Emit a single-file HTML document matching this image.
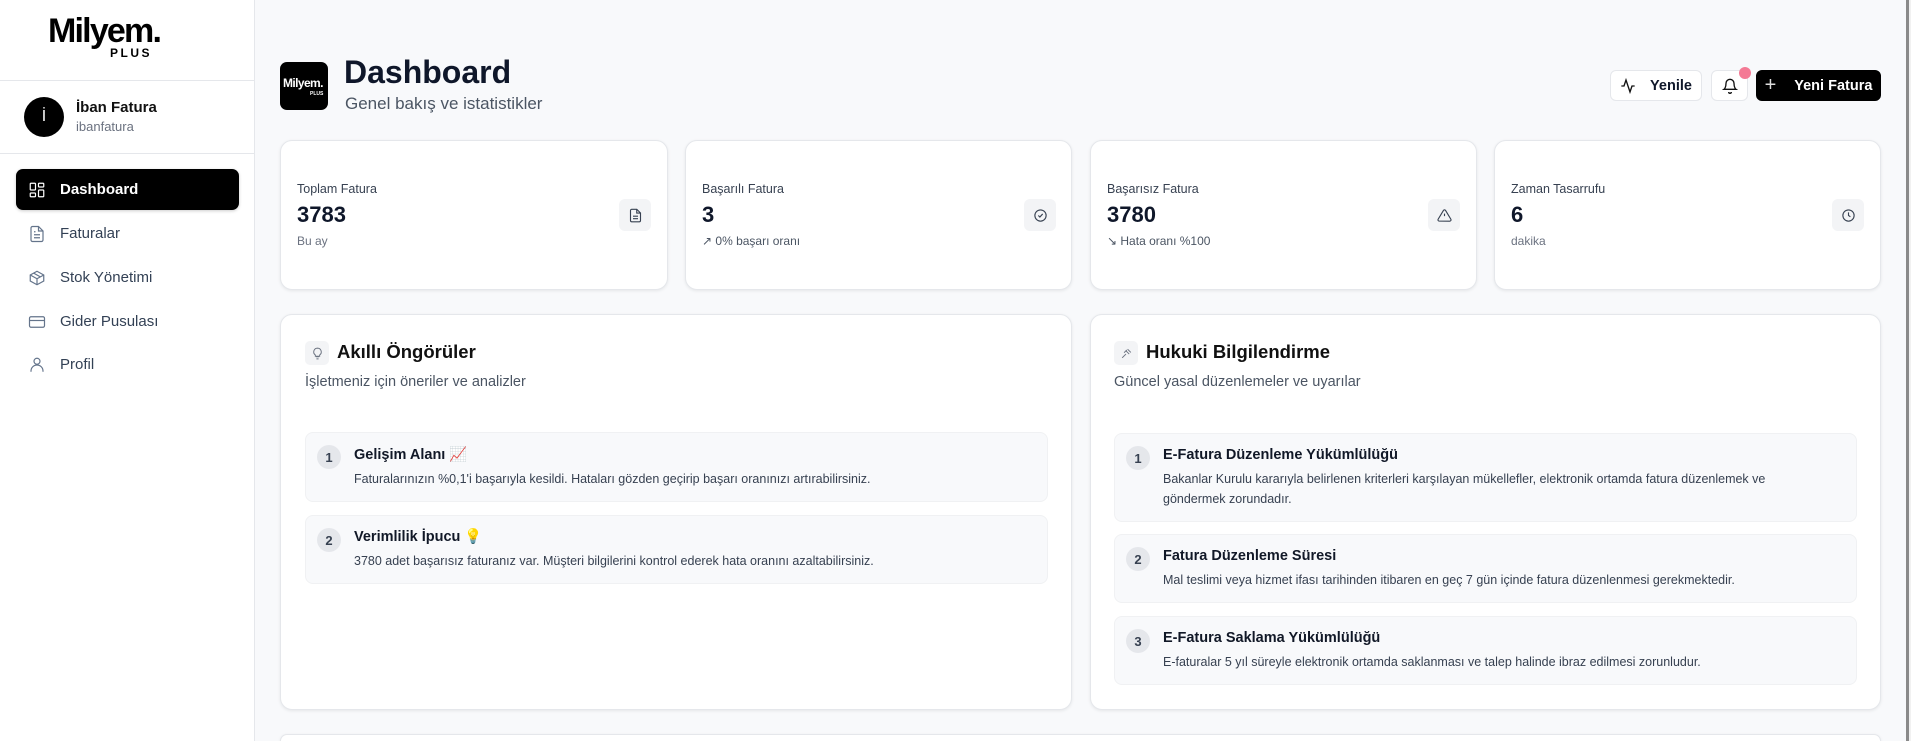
<!DOCTYPE html>
<html><head><meta charset="utf-8"><style>
*{box-sizing:border-box;margin:0;padding:0}
html{width:1911px;height:741px;overflow:hidden}
body{width:1911px;height:741px;overflow:hidden;background:#f8f9fb;font-family:"Liberation Sans","DejaVu Sans",sans-serif;color:#0f172a;position:relative}
.a{position:absolute}
.sb{left:0;top:0;width:255px;height:741px;background:#fff;border-right:1px solid #e5e7eb}
.hl{left:0;width:255px;height:1px;background:#e5e7eb}
.nav{left:16px;width:223px;height:41px;border-radius:7px;display:flex;align-items:center;padding-left:12px;font-size:15px;color:#334155}
.nav svg{width:18px;height:18px;margin-right:14px;stroke:#64748b;fill:none;stroke-width:1.6}
.card{background:#fff;border:1px solid #e5e7eb;border-radius:12px;box-shadow:0 1px 3px rgba(0,0,0,.08)}
.lab{font-size:12.5px;color:#374151}
.val{font-size:22px;font-weight:bold;color:#0f172a}
.sub{font-size:12px;color:#6b7280}
.ib{width:32px;height:32px;border-radius:6px;background:#f3f4f6;display:flex;align-items:center;justify-content:center}
.ib svg{width:15px;height:15px;stroke:#374151;fill:none;stroke-width:1.8}
.item{background:#f8f9fb;border:1px solid #f0f1f3;border-radius:8px}
.num{width:24px;height:24px;border-radius:50%;background:#e5e7eb;font-size:13px;font-weight:bold;color:#374151;display:flex;align-items:center;justify-content:center}
.it{font-size:14.5px;font-weight:bold;color:#111827}
.id{font-size:12.5px;color:#374151;line-height:20px}
.btn{height:31px;border:1px solid #e5e7eb;border-radius:6px;background:#fff;display:flex;align-items:center;justify-content:center;font-size:14.5px;font-weight:bold}
</style></head><body>
<div class="a sb"></div>
<div class="a" style="left:48px;top:12px;font-size:34px;font-weight:bold;letter-spacing:-1.8px;color:#000">Milyem.</div>
<div class="a" style="left:110px;top:46px;font-size:12px;font-weight:bold;letter-spacing:2.5px;color:#000">PLUS</div>
<div class="a hl" style="top:80px"></div>
<div class="a" style="left:24px;top:97px;width:40px;height:40px;border-radius:50%;background:#000;color:#fff;font-size:16px;display:flex;align-items:center;justify-content:center">İ</div>
<div class="a" style="left:76px;top:99px;font-size:15px;font-weight:bold;color:#111">İban Fatura</div>
<div class="a" style="left:76px;top:119px;font-size:13px;color:#6b7280">ibanfatura</div>
<div class="a hl" style="top:153px"></div>
<div class="a nav" style="top:169px;background:#000;color:#fff;font-weight:bold;box-shadow:0 1px 3px rgba(0,0,0,.2)"><svg viewBox="0 0 24 24" style="stroke:#fff"><rect x="3" y="3" width="7" height="9" rx="1"/><rect x="14" y="3" width="7" height="5" rx="1"/><rect x="14" y="12" width="7" height="9" rx="1"/><rect x="3" y="16" width="7" height="5" rx="1"/></svg>Dashboard</div>
<div class="a nav" style="top:213px"><svg viewBox="0 0 24 24"><path d="M14 2H6a2 2 0 0 0-2 2v16a2 2 0 0 0 2 2h12a2 2 0 0 0 2-2V8z"/><path d="M14 2v6h6M8 13h8M8 17h8M8 9h2"/></svg>Faturalar</div>
<div class="a nav" style="top:257px"><svg viewBox="0 0 24 24"><path d="M21 8l-9-5-9 5v8l9 5 9-5z"/><path d="M3 8l9 5 9-5M12 13v8M7.5 5.5l9 5"/></svg>Stok Yönetimi</div>
<div class="a nav" style="top:301px"><svg viewBox="0 0 24 24"><rect x="2" y="5" width="20" height="14" rx="2"/><path d="M2 10h20"/></svg>Gider Pusulası</div>
<div class="a nav" style="top:344px"><svg viewBox="0 0 24 24"><circle cx="12" cy="7" r="4"/><path d="M4 21v-1a7 7 0 0 1 16 0v1"/></svg>Profil</div>

<div class="a" style="left:280px;top:62px;width:48px;height:48px;border-radius:7px;background:#000;color:#fff"><div class="a" style="left:3px;top:14px;font-size:12px;font-weight:bold;letter-spacing:-.6px">Milyem.</div><div class="a" style="left:30px;top:29px;font-size:5px;font-weight:bold">PLUS</div></div>
<div class="a" style="left:344px;top:54px;font-size:32px;font-weight:bold;color:#0f172a">Dashboard</div>
<div class="a" style="left:345px;top:94px;font-size:17px;color:#4b5563">Genel bakış ve istatistikler</div>

<div class="a btn" style="left:1610px;top:70px;width:92px"><svg viewBox="0 0 24 24" width="16" height="16" fill="none" stroke="#111" stroke-width="2" style="margin-right:14px"><path d="M22 12h-4l-3 9L9 3l-3 9H2"/></svg>Yenile</div>
<div class="a btn" style="left:1711px;top:70px;width:37px"><svg viewBox="0 0 24 24" width="16" height="16" fill="none" stroke="#111" stroke-width="2"><path d="M6 8a6 6 0 0 1 12 0c0 7 3 9 3 9H3s3-2 3-9M10 21a2 2 0 0 0 4 0"/></svg></div>
<div class="a" style="left:1739px;top:67px;width:12px;height:12px;border-radius:50%;background:#f47a95"></div>
<div class="a btn" style="left:1756px;top:70px;width:125px;background:#000;border-color:#000;color:#fff"><span style="font-size:20px;font-weight:normal;margin-right:18px;color:#ddd">+</span>Yeni Fatura</div>

<div class="a card" style="left:280px;top:140px;width:388px;height:150px"></div>
<div class="a card" style="left:685px;top:140px;width:387px;height:150px"></div>
<div class="a card" style="left:1090px;top:140px;width:387px;height:150px"></div>
<div class="a card" style="left:1494px;top:140px;width:387px;height:150px"></div>

<div class="a lab" style="left:297px;top:182px">Toplam Fatura</div><div class="a val" style="left:297px;top:202px">3783</div><div class="a sub" style="left:297px;top:234px">Bu ay</div>
<div class="a ib" style="left:619px;top:199px"><svg viewBox="0 0 24 24"><path d="M14 2H6a2 2 0 0 0-2 2v16a2 2 0 0 0 2 2h12a2 2 0 0 0 2-2V8z"/><path d="M14 2v6h6M8 13h8M8 17h8"/></svg></div>
<div class="a lab" style="left:702px;top:182px">Başarılı Fatura</div><div class="a val" style="left:702px;top:202px">3</div><div class="a sub" style="left:702px;top:234px;color:#4b5563">↗ 0% başarı oranı</div>
<div class="a ib" style="left:1024px;top:199px"><svg viewBox="0 0 24 24"><circle cx="12" cy="12" r="9"/><path d="M8.5 12l2.5 2.5 4.5-5"/></svg></div>
<div class="a lab" style="left:1107px;top:182px">Başarısız Fatura</div><div class="a val" style="left:1107px;top:202px">3780</div><div class="a sub" style="left:1107px;top:234px;color:#4b5563">↘ Hata oranı %100</div>
<div class="a ib" style="left:1428px;top:199px"><svg viewBox="0 0 24 24"><path d="M10.3 3.9L1.8 18a2 2 0 0 0 1.7 3h17a2 2 0 0 0 1.7-3L13.7 3.9a2 2 0 0 0-3.4 0zM12 9v4M12 17h.01"/></svg></div>
<div class="a lab" style="left:1511px;top:182px">Zaman Tasarrufu</div><div class="a val" style="left:1511px;top:202px">6</div><div class="a sub" style="left:1511px;top:234px">dakika</div>
<div class="a ib" style="left:1832px;top:199px"><svg viewBox="0 0 24 24"><circle cx="12" cy="12" r="9"/><path d="M12 7v5l3 2"/></svg></div>

<div class="a card" style="left:280px;top:314px;width:792px;height:396px"></div>
<div class="a card" style="left:1090px;top:314px;width:791px;height:396px"></div>
<div class="a card" style="left:280px;top:734px;width:1601px;height:7px;border-bottom:none;border-radius:12px 12px 0 0"></div>

<div class="a" style="left:305px;top:341px;width:24px;height:24px;border-radius:5px;background:#f3f4f6;display:flex;align-items:center;justify-content:center"><svg viewBox="0 0 24 24" width="13" height="13" fill="none" stroke="#6b7280" stroke-width="1.8"><path d="M9 18h6M10 22h4M12 2a7 7 0 0 0-4 12.7V17h8v-2.3A7 7 0 0 0 12 2z"/></svg></div>
<div class="a" style="left:337px;top:341px;font-size:18.5px;font-weight:bold;color:#111">Akıllı Öngörüler</div>
<div class="a" style="left:305px;top:374px;font-size:14.5px;color:#4b5563">İşletmeniz için öneriler ve analizler</div>

<div class="a item" style="left:305px;top:432px;width:743px;height:70px"></div>
<div class="a num" style="left:317px;top:445px">1</div>
<div class="a it" style="left:354px;top:446px">Gelişim Alanı 📈</div>
<div class="a id" style="left:354px;top:469px">Faturalarınızın %0,1'i başarıyla kesildi. Hataları gözden geçirip başarı oranınızı artırabilirsiniz.</div>
<div class="a item" style="left:305px;top:515px;width:743px;height:69px"></div>
<div class="a num" style="left:317px;top:528px">2</div>
<div class="a it" style="left:354px;top:528px">Verimlilik İpucu 💡</div>
<div class="a id" style="left:354px;top:551px">3780 adet başarısız faturanız var. Müşteri bilgilerini kontrol ederek hata oranını azaltabilirsiniz.</div>

<div class="a" style="left:1114px;top:341px;width:24px;height:24px;border-radius:5px;background:#f3f4f6;display:flex;align-items:center;justify-content:center"><svg viewBox="0 0 24 24" width="13" height="13" fill="none" stroke="#6b7280" stroke-width="1.8"><path d="M14 4l6 6M11 7l6 6M12.5 5.5l-5 5M4 20l7-7"/></svg></div>
<div class="a" style="left:1146px;top:341px;font-size:18.5px;font-weight:bold;color:#111">Hukuki Bilgilendirme</div>
<div class="a" style="left:1114px;top:374px;font-size:14.5px;color:#4b5563">Güncel yasal düzenlemeler ve uyarılar</div>

<div class="a item" style="left:1114px;top:433px;width:743px;height:89px"></div>
<div class="a num" style="left:1126px;top:446px">1</div>
<div class="a it" style="left:1163px;top:447px">E-Fatura Düzenleme Yükümlülüğü</div>
<div class="a id" style="left:1163px;top:469px;width:660px">Bakanlar Kurulu kararıyla belirlenen kriterleri karşılayan mükellefler, elektronik ortamda fatura düzenlemek ve göndermek zorundadır.</div>
<div class="a item" style="left:1114px;top:534px;width:743px;height:69px"></div>
<div class="a num" style="left:1126px;top:547px">2</div>
<div class="a it" style="left:1163px;top:548px">Fatura Düzenleme Süresi</div>
<div class="a id" style="left:1163px;top:570px">Mal teslimi veya hizmet ifası tarihinden itibaren en geç 7 gün içinde fatura düzenlenmesi gerekmektedir.</div>
<div class="a item" style="left:1114px;top:616px;width:743px;height:69px"></div>
<div class="a num" style="left:1126px;top:629px">3</div>
<div class="a it" style="left:1163px;top:630px">E-Fatura Saklama Yükümlülüğü</div>
<div class="a id" style="left:1163px;top:652px">E-faturalar 5 yıl süreyle elektronik ortamda saklanması ve talep halinde ibraz edilmesi zorunludur.</div>

<div class="a" style="left:1906px;top:0;width:3px;height:741px;background:#8a8a8a"></div>
<div class="a" style="left:1909px;top:0;width:2px;height:741px;background:#f1f1f1"></div>
</body></html>
